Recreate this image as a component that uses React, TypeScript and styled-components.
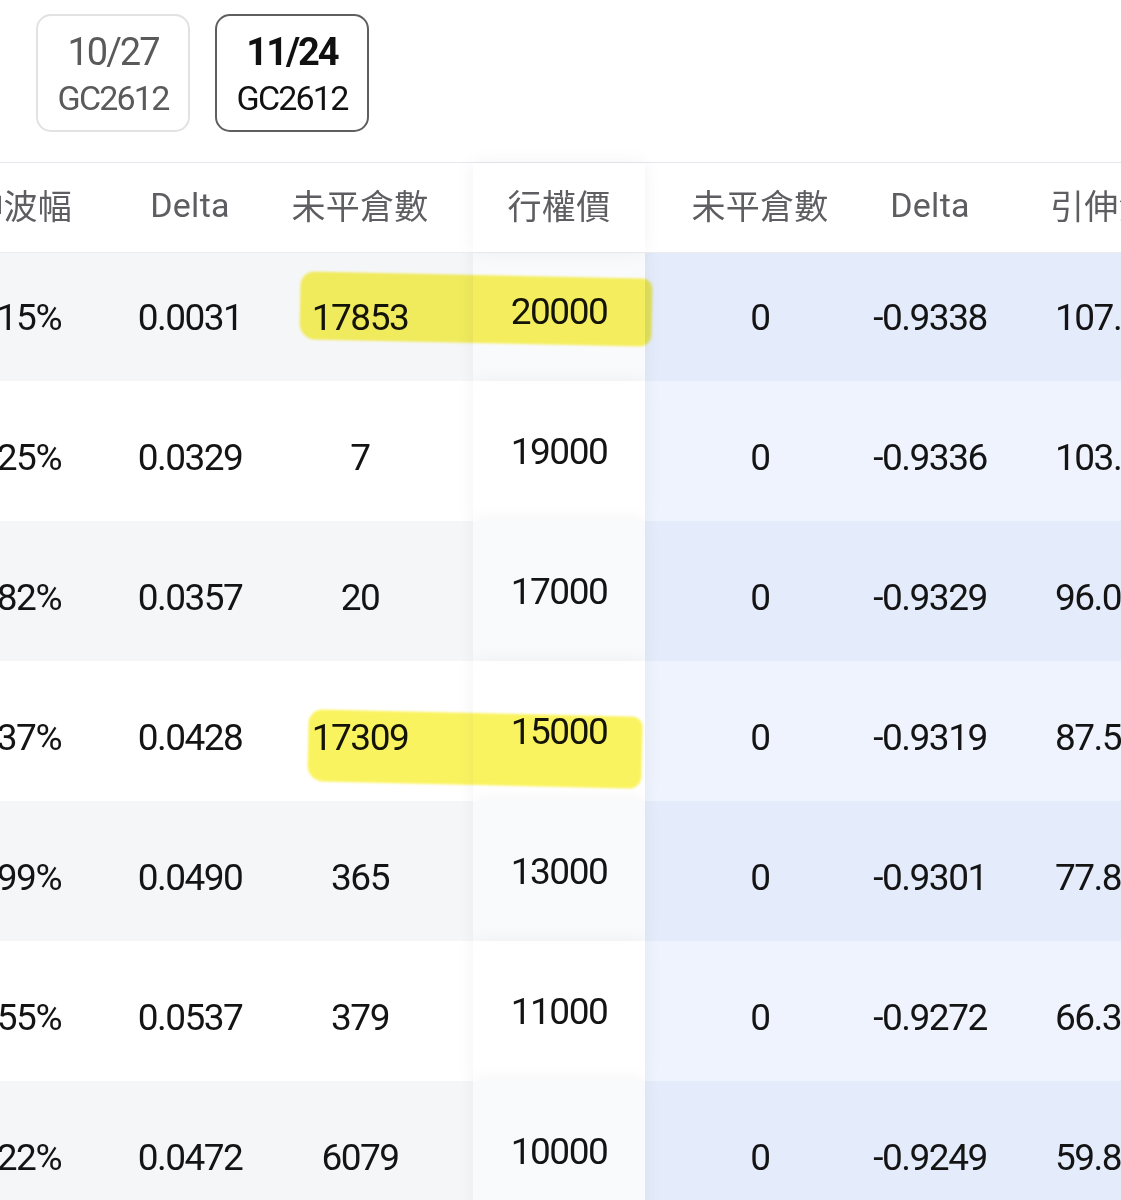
import React from "react";
import styled, { createGlobalStyle } from "styled-components";

const Global = createGlobalStyle`
  html, body { margin: 0; padding: 0; background: #ffffff; }
  body { font-family: Roboto, "Noto Sans CJK TC", sans-serif; }
  #root { width: 1121px; overflow: hidden; }
`;

const Page = styled.div`
  width: 1121px;
  height: 1200px;
  overflow: hidden;
  background: #ffffff;
`;

const Tabs = styled.div`
  display: flex;
  gap: 25px;
  padding: 14px 0 0 36px;
  height: 162px;
  box-sizing: border-box;
`;

const Tab = styled.div<{ $active?: boolean }>`
  width: 154px;
  height: 118px;
  box-sizing: border-box;
  border-radius: 15px;
  border: ${(p) => (p.$active ? "2.5px solid #5f5f5f" : "2.5px solid #e2e2e4")};
  display: flex;
  flex-direction: column;
  align-items: center;
  justify-content: center;
  gap: 8px;
  padding-top: 2px;
  color: ${(p) => (p.$active ? "#111111" : "#5a5a5a")};
  font-family: Roboto, sans-serif;
`;

const TabDate = styled.div<{ $active?: boolean }>`
  font-size: 38px;
  line-height: 40px;
  font-weight: ${(p) => (p.$active ? 700 : 400)};
  letter-spacing: -2px;
`;

const TabCode = styled.div`
  font-size: 34px;
  line-height: 36px;
  font-weight: 400;
  letter-spacing: -1.8px;
`;

const Table = styled.div`
  margin-left: -65px;
  width: 1250px;
  border-top: 1.5px solid #e6e6ec;
`;

const Row = styled.div<{ $header?: boolean }>`
  position: relative;
  display: flex;
  height: ${(p) => (p.$header ? "90px" : "140px")};
  ${(p) =>
    p.$header
      ? `z-index: 5; border-bottom: 1.5px solid #ececf0; box-sizing: border-box; margin-bottom: -12px; background: #fff;`
      : ""}
`;

const LeftGroup = styled.div<{ $bg: string; $header?: boolean }>`
  display: flex;
  width: 538px;
  padding-right: 28px;
  box-sizing: border-box;
  background: ${(p) => p.$bg};
  padding-top: ${(p) => (p.$header ? "0" : "12px")};
  padding-bottom: ${(p) => (p.$header ? "6px" : "0")};
`;

const RightGroup = styled.div<{ $bg: string; $header?: boolean }>`
  display: flex;
  width: 540px;
  padding-left: 30px;
  box-sizing: border-box;
  background: ${(p) => p.$bg};
  padding-top: ${(p) => (p.$header ? "0" : "12px")};
  padding-bottom: ${(p) => (p.$header ? "6px" : "0")};
`;

const Cell = styled.div<{ $header?: boolean; $align?: "start" | "end"; $inset?: number }>`
  width: 170px;
  flex: none;
  box-sizing: border-box;
  display: flex;
  align-items: center;
  justify-content: ${(p) =>
    p.$align === "end" ? "flex-end" : p.$align === "start" ? "flex-start" : "center"};
  padding-right: ${(p) => (p.$align === "end" ? `${p.$inset ?? 0}px` : "0")};
  padding-left: ${(p) => (p.$align === "start" ? `${p.$inset ?? 0}px` : "0")};
  white-space: nowrap;
  font-size: ${(p) => (p.$header ? "34px" : "37px")};
  letter-spacing: ${(p) => (p.$header ? "0.3px" : "-1.5px")};
  color: ${(p) => (p.$header ? "#5e5e62" : "#141414")};
  font-family: Roboto, "Noto Sans CJK TC", sans-serif;
`;

const StrikeCell = styled.div<{ $bg: string; $header?: boolean }>`
  width: 172px;
  flex: none;
  z-index: 1;
  display: flex;
  align-items: center;
  justify-content: center;
  box-sizing: border-box;
  padding-bottom: ${(p) => (p.$header ? "6px" : "0")};
  background: ${(p) => p.$bg};
  box-shadow: 0 0 18px rgba(40, 40, 60, 0.055);
  font-size: ${(p) => (p.$header ? "34px" : "37px")};
  letter-spacing: ${(p) => (p.$header ? "0.3px" : "-1.5px")};
  color: ${(p) => (p.$header ? "#5e5e62" : "#141414")};
  font-family: Roboto, "Noto Sans CJK TC", sans-serif;
`;

const Marker = styled.div`
  position: absolute;
  z-index: 3;
  background: #faf360;
  mix-blend-mode: multiply;
  filter: blur(1.2px);
  border-radius: 14px 10px 12px 16px;
  pointer-events: none;
`;

type RowData = {
  iv: string;
  delta: string;
  oi: string;
  strike: string;
  pOi: string;
  pDelta: string;
  pIv: string;
  mark?: { left: number; top: number; width: number; height: number; rot: number };
};

const rows: RowData[] = [
  { iv: "9.15%", delta: "0.0031", oi: "17853", strike: "20000", pOi: "0", pDelta: "-0.9338", pIv: "107.15%", mark: { left: 365, top: 34, width: 352, height: 68, rot: 1.2 } },
  { iv: "8.25%", delta: "0.0329", oi: "7", strike: "19000", pOi: "0", pDelta: "-0.9336", pIv: "103.62%" },
  { iv: "6.82%", delta: "0.0357", oi: "20", strike: "17000", pOi: "0", pDelta: "-0.9329", pIv: "96.05%" },
  { iv: "5.37%", delta: "0.0428", oi: "17309", strike: "15000", pOi: "0", pDelta: "-0.9319", pIv: "87.51%", mark: { left: 373, top: 52, width: 334, height: 72, rot: 1.3 } },
  { iv: "4.99%", delta: "0.0490", oi: "365", strike: "13000", pOi: "0", pDelta: "-0.9301", pIv: "77.84%" },
  { iv: "3.55%", delta: "0.0537", oi: "379", strike: "11000", pOi: "0", pDelta: "-0.9272", pIv: "66.36%" },
  { iv: "3.22%", delta: "0.0472", oi: "6079", strike: "10000", pOi: "0", pDelta: "-0.9249", pIv: "59.80%" },
];

const colors = {
  leftOdd: "#f5f6f8",
  leftEven: "#ffffff",
  strikeOdd: "#f9fafb",
  strikeEven: "#ffffff",
  rightOdd: "#e4ebfa",
  rightEven: "#eef3fd",
};

export default function App() {
  return (
    <Page>
      <Global />
      <Tabs>
        <Tab>
          <TabDate>10/27</TabDate>
          <TabCode>GC2612</TabCode>
        </Tab>
        <Tab $active>
          <TabDate $active>11/24</TabDate>
          <TabCode>GC2612</TabCode>
        </Tab>
      </Tabs>
      <Table>
        <Row $header>
          <LeftGroup $bg="#ffffff" $header>
            <Cell $header $align="end" $inset={33}>引伸波幅</Cell>
            <Cell $header>Delta</Cell>
            <Cell $header>未平倉數</Cell>
          </LeftGroup>
          <StrikeCell $bg="#ffffff" $header>行權價</StrikeCell>
          <RightGroup $bg="#ffffff" $header>
            <Cell $header>未平倉數</Cell>
            <Cell $header>Delta</Cell>
            <Cell $header $align="start" $inset={35}>引伸波幅</Cell>
          </RightGroup>
        </Row>
        {rows.map((r, i) => {
          const odd = i % 2 === 0;
          return (
            <Row key={r.strike}>
              <LeftGroup $bg={odd ? colors.leftOdd : colors.leftEven}>
                <Cell $align="end" $inset={44}>{r.iv}</Cell>
                <Cell>{r.delta}</Cell>
                <Cell>{r.oi}</Cell>
              </LeftGroup>
              <StrikeCell $bg={odd ? colors.strikeOdd : colors.strikeEven}>{r.strike}</StrikeCell>
              <RightGroup $bg={odd ? colors.rightOdd : colors.rightEven}>
                <Cell>{r.pOi}</Cell>
                <Cell>{r.pDelta}</Cell>
                <Cell $align="start" $inset={40}>{r.pIv}</Cell>
              </RightGroup>
              {r.mark && (
                <Marker
                  style={{
                    left: r.mark.left,
                    top: r.mark.top,
                    width: r.mark.width,
                    height: r.mark.height,
                    transform: `rotate(${r.mark.rot}deg)`,
                  }}
                />
              )}
            </Row>
          );
        })}
      </Table>
    </Page>
  );
}
